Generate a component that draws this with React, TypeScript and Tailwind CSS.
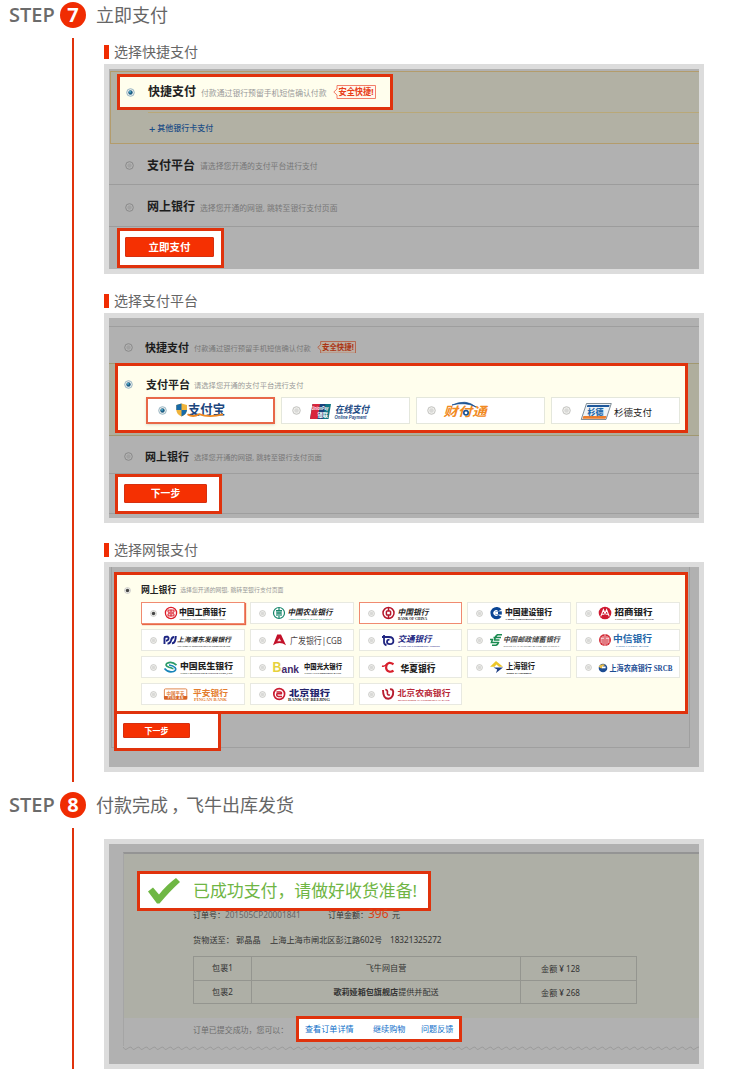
import React from "react";

const CJK = "font-['Noto_Sans','Noto_Sans_CJK_SC',sans-serif]";

function Radio({ on = false, dim = false, small = false }: { on?: boolean; dim?: boolean; small?: boolean }) {
  const s = small ? 7 : 9;
  return (
    <svg width={s} height={s} viewBox="0 0 9 9" className="shrink-0">
      <circle cx="4.5" cy="4.5" r="3.8" fill={dim ? "#b4b4b4" : "#f1f1ee"} stroke={dim ? "#858585" : on && !small ? "#8fb0bf" : "#bdbdba"} strokeWidth="0.9" />
      <circle cx="4.5" cy="4.5" r="2.2" fill={on ? (small ? "#444444" : "#1d5f86") : dim ? "#a2a2a2" : "#d9d9d7"} />
      {on && !small && <circle cx="4" cy="3.8" r="0.9" fill="#5fc0dd" />}
    </svg>
  );
}

function StepHeader({ n, children, className }: { n: number; children: React.ReactNode; className: string }) {
  return (
    <div className={`flex items-center pl-[9px] ${className}`}>
      <div className="w-[51px] font-['Open_Sans',sans-serif] text-[20px] leading-none font-semibold text-[#6b6b6b]">STEP</div>
      <div className="flex h-[26px] w-[26px] items-center justify-center rounded-full bg-[#f02c02] font-['Open_Sans',sans-serif] text-[20px] leading-none font-bold text-white">
        {n}
      </div>
      <h2 className="ml-[10px] text-[18px] leading-none text-[#666666]">{children}</h2>
    </div>
  );
}

function Label({ children }: { children: React.ReactNode }) {
  return (
    <div className="flex h-[14px] items-center border-l-[5px] border-[#f02c02] pl-[5px] text-[14px] leading-none whitespace-nowrap text-[#666666]">
      {children}
    </div>
  );
}

function Panel({ className, children }: { className: string; children: React.ReactNode }) {
  return <div className={`w-[600px] overflow-hidden border-[5px] border-[#dcdcdc] bg-[#b1b1b1] ${className}`}>{children}</div>;
}

function Badge({ dim = false }: { dim?: boolean }) {
  return (
    <svg width={dim ? 39 : 43} height={dim ? 12.7 : 14} viewBox="0 0 43 14" className="ml-[6px] shrink-0">
      <path d="M4 .5H42.5V13.5H4V10L.8 7L4 4Z" fill={dim ? "#bcaea3" : "#fff8ed"} stroke={dim ? "#b5553a" : "#f0705a"} strokeWidth="0.9" />
      <text x="5.5" y="10.4" fontSize="9" fontWeight="700" textLength="35" lengthAdjust="spacingAndGlyphs" fill={dim ? "#ab3514" : "#e8401a"}>
        安全快捷!
      </text>
    </svg>
  );
}

function Button({ children, className }: { children: React.ReactNode; className: string }) {
  return (
    <button className={`flex items-center justify-center rounded-[1px] border border-[#d63010] bg-[#f53002] leading-none font-bold text-white ${className}`}>
      {children}
    </button>
  );
}

function Pay({ on = false, children }: { on?: boolean; children: React.ReactNode }) {
  return (
    <div className={`flex h-[27px] w-[129px] items-center bg-white ${on ? "border-2 border-[#e86848] pl-[10px] shadow-sm" : "border border-[#e4e7dc] pl-[10px]"}`}>
      <Radio on={on} />
      <svg width="100" height="25" viewBox="0 0 100 25" className="ml-[4px] shrink-0">
        {children}
      </svg>
    </div>
  );
}

type Bank = {
  icon: React.ReactNode;
  name: string;
  x: number;
  w: number;
  color?: string;
  y?: number;
  weight?: number;
  size?: number;
  slant?: boolean;
  serif?: boolean;
  sub?: string;
  subW?: number;
  subY?: number;
  subX?: number;
  subSize?: number;
  subColor?: string;
  red?: boolean;
};

const banks: Bank[] = [
  {
    name: "中国工商银行", x: 16, w: 47, weight: 900, sub: "INDUSTRIAL AND COMMERCIAL BANK OF CHINA", red: true,
    icon: <g fill="none" stroke="#dc1c28" strokeWidth="1.3"><circle cx="8" cy="10" r="5.6" /><path d="M5 7.1H11V9.2H5ZM5 10.8H11V12.9H5ZM8 6.5V9M8 11V13.6" strokeWidth="1" /></g>,
  },
  {
    name: "中国农业银行", x: 15.5, w: 45, slant: true, sub: "AGRICULTURAL BANK OF CHINA", subColor: "#169272",
    icon: <g fill="none" stroke="#17866a" strokeWidth="1.2"><circle cx="7" cy="10" r="5.5" /><path d="M7 5V15M4 7.5H10M4.6 10H9.4M5 7.5V13M9 7.5V13" /></g>,
  },
  {
    name: "中国银行", x: 16.5, w: 31, slant: true, sub: "BANK OF CHINA", subW: 29, subSize: 4, red: true,
    icon: <g fill="none" stroke="#b5172b" strokeWidth="1.5"><circle cx="7.5" cy="10" r="5.5" /><rect x="5.4" y="8" width="4.2" height="4" rx=".8" /><path d="M7.5 4.5V8M7.5 12V15.5" /></g>,
  },
  {
    name: "中国建设银行", x: 16, w: 47, weight: 900, sub: "China Construction Bank", subW: 38,
    icon: <g><path d="M12.6 6.4A6.2 6.2 0 1 0 12.6 13.8L9.2 12A2.8 2.8 0 1 1 9.2 8.2Z" fill="#0b4594" /><path d="M6.4 8.3H12.8V11.6H6.4Z" fill="#0b4594" /><path d="M6.2 8.6H9V11.2H6.2Z" fill="#fff" /></g>,
  },
  {
    name: "招商银行", x: 16.5, w: 38, weight: 900, sub: "CHINA MERCHANTS BANK", subW: 39,
    icon: <g><circle cx="7" cy="10" r="6.3" fill="#cf1830" /><path d="M2.8 13.4L5.4 6.7L7 10.5L8.6 6.7L11.2 13.4M4 11.2H6.2M7.8 11.2H10" fill="none" stroke="#fff" strokeWidth="1.1" /></g>,
  },
  {
    name: "上海浦东发展银行", x: 14, w: 54, size: 6.6, slant: true, sub: "SHANGHAI PUDONG DEVELOPMENT BANK",
    icon: <g fill="none" stroke="#1c2482" strokeWidth="1.9"><path d="M1.5 14V8Q1.5 6.8 3 6.8H4.8Q6 7.5 5.5 9Q5 10.8 3 10.8M4.5 13.5Q7 14 8 10.5Q8.8 7 11.2 7M9 13.2Q12.6 13.5 12.8 6" /></g>,
  },
  {
    name: "广发银行|CGB", x: 18, w: 52, weight: 400, size: 9, y: 13.5, color: "#4b4446",
    icon: <g><path d="M5.2 4.5H9L14 15.2Q7.5 10.8 1 15.2Z" fill="#c21029" /><path d="M7.3 8.2L9.3 11.3H5.3Z" fill="#fff" opacity=".85" /></g>,
  },
  {
    name: "交通银行", x: 16.5, w: 34, size: 8.5, slant: true, color: "#202581", sub: "BANK OF COMMUNICATIONS", subW: 42, subColor: "#202581",
    icon: <g fill="none" stroke="#202581" strokeWidth="1.8"><path d="M1 7H8Q12.4 7 12.4 11Q12.4 14.2 8.8 14.2Q6 14.2 6 11.8Q6 9.7 8.5 9.7M3 5V12Q3 14.5 5.5 15.3" /></g>,
  },
  {
    name: "中国邮政储蓄银行", x: 14, w: 57, size: 7, slant: true, color: "#444444", sub: "POSTAL SAVINGS BANK OF CHINA", subColor: "#666666",
    icon: <g fill="none" stroke="#1b8b51" strokeWidth="1.5"><path d="M13 4.8H8.5Q6 6 5.6 10H10.5M12 7.4H4.5M9.7 12.6H2.4L3.5 9.6H1M3 15.2H7Q9 14.5 9.8 12" /></g>,
  },
  {
    name: "中信银行", x: 15, w: 39, size: 9, color: "#2365a9", sub: "CHINA CITIC BANK", subX: 18, subW: 33, subColor: "#2365a9",
    icon: <g><circle cx="7" cy="10" r="6" fill="#d32b37" /><path d="M7 4V16M3.2 7.3V13M5 6V14.5M9 6V14.5M10.8 7.3V13M3 8.3H6M8 8.3H11" stroke="#fff" strokeWidth=".75" /></g>,
  },
  {
    name: "中国民生银行", x: 17, w: 53, size: 8.2, weight: 900, sub: "CHINA MINSHENG BANKING CORP.,LTD",
    icon: <g fill="none" strokeWidth="1.7"><path d="M13.5 8.2Q9 3.8 4.2 6.2Q1.2 8.6 6 10.2Q10 11.2 10 12.2" stroke="#2a9b68" /><path d="M1.5 11.5Q5 16 10.6 14.5Q14 13 12 10.5Q10 8.6 6 8" stroke="#1684ba" /></g>,
  },
  {
    name: "中国光大银行", x: 32, w: 38, size: 7, y: 12, weight: 900, sub: "CHINA EVERBRIGHT BANK", subY: 16.8,
    icon: <g><text x="0.5" y="15" fontSize="14" fontFamily="Liberation Sans" fontWeight="bold" textLength="9" lengthAdjust="spacingAndGlyphs" fill="#e6d13c">B</text><text x="9.5" y="15.5" fontSize="10" fontFamily="Liberation Sans" fontWeight="bold" textLength="17.5" lengthAdjust="spacingAndGlyphs" fill="#432a6a">ank</text></g>,
  },
  {
    name: "华夏银行", x: 19.5, w: 35, size: 8.6, y: 15, weight: 900, sub: "HUAXIA  BANK", subX: 28, subW: 25, subY: 5.6,
    icon: <g fill="none" stroke="#d81f2c" strokeWidth="2.2"><path d="M12.5 7.2Q7.5 4 5.5 8.3Q4 13.5 8.5 14.7Q10.8 15 12.5 13.7" /><path d="M1 9Q4 10 6 6.7" strokeWidth="1.4" /></g>,
  },
  {
    name: "上海银行", x: 17, w: 29, size: 8.4, serif: true, sub: "Bank of Shanghai", subW: 25,
    icon: <g><path d="M1 9.8L7 4L14 9.8H10L7.4 7.6L5.5 9.8Z" fill="#ecc62b" /><path d="M4.5 10.5H14L7 16L8.2 12.6Z" fill="#1d3e85" /></g>,
  },
  {
    name: "上海农商银行 SRCB", x: 11.5, w: 63, size: 7.8, y: 13.5, color: "#1c4c93", serif: true,
    icon: <g><circle cx="5" cy="11" r="4.3" fill="#1c4c93" /><path d="M0.6 9.5Q4 5.8 7.5 8Q4.5 8.5 4.3 11.5Q2 11.5 .6 9.5Z" fill="#e8bd4a" /><path d="M4 9.5H7.6V11.3H4Z" fill="#fff" /></g>,
  },
  {
    name: "平安银行", x: 30, w: 35, size: 8.4, color: "#e47d2e", sub: "PINGAN BANK", subX: 31, subW: 33, subSize: 3.8, subColor: "#e47d2e",
    icon: <g><rect x="1.4" y="4.9" width="22.4" height="10.2" rx="1" fill="#fff" stroke="#df7b3c" strokeWidth=".9" /><rect x="1" y="12" width="23.2" height="3.5" fill="#d86324" /><text x="3.5" y="10.6" fontSize="4.5" fontWeight="700" textLength="18" lengthAdjust="spacingAndGlyphs" fill="#df7b3c">中国平安</text><text x="5" y="14.9" fontSize="2.6" fontFamily="Liberation Sans" fontWeight="700" textLength="15" fill="#ffffff">PING AN</text></g>,
  },
  {
    name: "北京银行", x: 17, w: 41, size: 8.4, color: "#22226a", weight: 900, sub: "BANK OF BEIJING", subX: 16, subW: 42, subSize: 4,
    icon: <g fill="none" stroke="#ca1d32" strokeWidth="1.7"><circle cx="7.2" cy="10" r="5.4" /><path d="M4.5 8H8Q10 8 9.4 9.8H5Q4 12 6.5 12.4H10" strokeWidth="1.5" /></g>,
  },
  {
    name: "北京农商银行", x: 16.5, w: 53, size: 8.4, color: "#b72838", sub: "BEIJING RURAL COMMERCIAL BANK", subColor: "#b72838",
    icon: <g fill="none" stroke="#b81f30" strokeWidth="1.9"><path d="M2 6Q2 14.8 7.3 14.8Q12.5 14 12.2 7.5Q11.6 4.8 9 5.4" /><path d="M4.3 5.5Q7 6.2 6.4 8.6Q6 11.5 9 11" strokeWidth="1.6" /></g>,
  },
];

function BankCell({ bank, on }: { bank: Bank; on: boolean }) {
  return (
    <div className={`flex h-[22px] items-center border bg-white pl-[8px] ${bank.red ? "border-[#f08a70]" : "border-[#e8e9e1]"} ${on ? "shadow-[1px_1px_1px_#e86848]" : ""}`}>
      <Radio small on={on} />
      <svg width="78" height="20" viewBox="0 0 78 20" className="ml-[6px] shrink-0 overflow-visible">
        {bank.icon}
        <text
          x={bank.x}
          y={bank.y ?? 12}
          fontSize={bank.size ?? 8}
          fontWeight={bank.weight ?? 700}
          fontStyle={bank.slant ? "italic" : "normal"}
          fontFamily={bank.serif ? "'Liberation Serif','Noto Sans CJK SC',serif" : undefined}
          fill={bank.color ?? "#1f1f1f"}
          textLength={bank.w}
          lengthAdjust="spacingAndGlyphs"
        >
          {bank.name}
        </text>
        {bank.sub && (
          <text
            x={bank.subX ?? bank.x + 0.5}
            y={bank.subY ?? 17}
            fontSize={bank.subSize ?? 2.9}
            fontWeight="700"
            fontFamily="'Liberation Serif',serif"
            fill={bank.subColor ?? "#222222"}
            textLength={bank.subW ?? bank.w - 1}
            lengthAdjust="spacingAndGlyphs"
          >
            {bank.sub}
          </text>
        )}
      </svg>
    </div>
  );
}

function QuickPayPanel() {
  return (
    <Panel className="h-[210px]">
      <div className="mt-[2px] ml-px h-[73px] border-y border-l border-[#b39c6c] bg-[#b2b1a4]">
        <div className="mt-[2px] ml-[6px] flex h-[36px] w-[276px] items-center border-[3px] border-[#e0320c] bg-[#fffeed] pl-[6px] whitespace-nowrap">
          <Radio on />
          <strong className="ml-[13px] text-[12px] leading-none text-[#222222]">快捷支付</strong>
          <span className="mt-[3px] ml-[5px] text-[7.85px] leading-none text-[#999999]">付款通过银行预留手机短信确认付款</span>
          <Badge />
        </div>
        <div className="mt-[2px] ml-[37px] flex h-[31px] items-center border-t border-[#b9a878] pl-[1px] text-[8px] leading-none font-medium text-[#1c4d86]">
          <span className="mr-[2px] text-[11px]">+</span>其他银行卡支付
        </div>
      </div>
      <div className="flex h-[41px] items-center border-b border-[#9c9c9c] pt-[3px] pl-[16px]">
        <Radio dim />
        <strong className="ml-[13px] text-[12px] leading-none text-[#1c1c1c]">支付平台</strong>
        <span className="mt-[3px] ml-[5px] text-[7.85px] leading-none text-[#777777]">请选择您开通的支付平台进行支付</span>
      </div>
      <div className="flex h-[42px] items-center border-b border-[#9c9c9c] pt-[3px] pl-[16px]">
        <Radio dim />
        <strong className="ml-[13px] text-[12px] leading-none text-[#1c1c1c]">网上银行</strong>
        <span className="mt-[3px] ml-[5px] text-[7.85px] leading-none text-[#777777]">选择您开通的网银, 跳转至银行支付页面</span>
      </div>
      <div className="mt-[1px] ml-[8px] h-[40px] w-[107px] border-[3px] border-[#e0320c] bg-white pt-[6px] pl-[5px]">
        <Button className="h-[20px] w-[89px] text-[10.5px]">立即支付</Button>
      </div>
    </Panel>
  );
}

function PlatformPanel() {
  return (
    <Panel className="h-[210px]">
      <div className="mt-[8px] flex h-[37px] items-center border-t border-[#9e9e9e] pt-[4px] pl-[15px] whitespace-nowrap">
        <Radio dim />
        <strong className="ml-[12px] text-[11px] leading-none text-[#1c1c1c]">快捷支付</strong>
        <span className="mt-[3px] ml-[5px] text-[7.3px] leading-none text-[#777777]">付款通过银行预留手机短信确认付款</span>
        <Badge dim />
      </div>
      <div className="h-[73px] border-y border-[#a19870] bg-[#afae9d]">
        <div className="-mt-px ml-[6px] h-[70px] w-[573px] border-[3px] border-[#e0320c] bg-[#fffeed]">
          <div className="flex h-[31px] items-center pt-[6px] pl-[6px] whitespace-nowrap">
            <Radio on />
            <strong className="ml-[13px] text-[11px] leading-none text-[#222222]">支付平台</strong>
            <span className="mt-[2px] ml-[4px] text-[7.3px] leading-none text-[#999999]">请选择您开通的支付平台进行支付</span>
          </div>
          <div className="flex gap-[6px] pl-[28px]">
            <Pay on>
              <path d="M10.5 5.5L16 7V12Q15.5 16.5 10.5 18.5Q5.7 16.5 5.3 12V7Z" fill="#f0b43b" />
              <path d="M10.5 5.5V12H5.3V7ZM10.5 12H16Q15.5 16.5 10.5 18.5Z" fill="#176aa8" />
              <text x="17" y="16" fontSize="13" fontWeight="700" textLength="37" lengthAdjust="spacingAndGlyphs" fill="#1d477e">支付宝</text>
              <path d="M16.5 16.2Q22 19.8 28 16.2Q38 20 52 16.4" fill="none" stroke="#f18a22" strokeWidth="1.8" />
            </Pay>
            <Pay>
              <path d="M7.5 6H26L23.5 21H5Z" fill="#0e7583" />
              <path d="M7.5 6H15L12.7 21H5Z" fill="#d8243c" />
              <path d="M15 6H20.5L18 21H12.7Z" fill="#19437c" />
              <text x="6.5" y="12.2" fontSize="5" fontFamily="Liberation Sans" fontWeight="700" fontStyle="italic" textLength="17" lengthAdjust="spacingAndGlyphs" fill="#fff">UnionPay</text>
              <text x="12.5" y="18.7" fontSize="5.5" fontWeight="700" textLength="10.5" lengthAdjust="spacingAndGlyphs" fill="#fff">银联</text>
              <text x="30" y="15.3" fontSize="10" fontWeight="700" fontStyle="italic" textLength="34" lengthAdjust="spacingAndGlyphs" fill="#1f4c85">在线支付</text>
              <text x="29.5" y="20.7" fontSize="4.5" fontFamily="Liberation Sans" fontWeight="700" fontStyle="italic" textLength="32" lengthAdjust="spacingAndGlyphs" fill="#1f4c85">Online Payment</text>
            </Pay>
            <Pay>
              <text x="3.5" y="17.8" fontSize="12.5" fontWeight="700" fontStyle="italic" textLength="43" lengthAdjust="spacingAndGlyphs" fill="#f18a22">财付通</text>
              <path d="M12 7Q26 .5 36 9Q26 3.5 12 7Z" fill="#164f91" stroke="#164f91" strokeWidth=".7" />
              <circle cx="26" cy="14.8" r="2.2" fill="#fff" stroke="#164f91" strokeWidth="1.6" />
            </Pay>
            <Pay>
              <path d="M11.5 5.5H36.3L31 21.5H6.2Z" fill="#eef3f7" stroke="#62727e" strokeWidth=".8" />
              <path d="M12.5 7H34.6L34 9H11.8Z" fill="#1d579b" />
              <path d="M8.4 18H31.5L30.5 20.7H7.5Z" fill="#ee7d2b" />
              <text x="12.5" y="16.7" fontSize="8" fontWeight="900" textLength="16" lengthAdjust="spacingAndGlyphs" fill="#1d68a9">杉德</text>
              <text x="39" y="18" fontSize="9.5" textLength="38" lengthAdjust="spacingAndGlyphs" fill="#222">杉德支付</text>
            </Pay>
          </div>
        </div>
      </div>
      <div className="flex h-[38px] items-center border-b border-[#9e9e9e] pt-[3px] pl-[15px]">
        <Radio dim />
        <strong className="ml-[12px] text-[11px] leading-none text-[#1c1c1c]">网上银行</strong>
        <span className="mt-[3px] ml-[5px] text-[7.3px] leading-none text-[#777777]">选择您开通的网银, 跳转至银行支付页面</span>
      </div>
      <div className="h-[40px] border-b border-[#9e9e9e]">
        <div className="ml-[6px] h-[40px] w-[107px] border-[3px] border-[#e0320c] bg-white pt-[7px] pl-[6px]">
          <Button className="h-[19px] w-[83px] text-[9.8px]">下一步</Button>
        </div>
      </div>
    </Panel>
  );
}

function BankPanel() {
  return (
    <Panel className="h-[210px]">
      <div className="ml-[2px] h-[181px] w-[579px] border-x border-b border-[#9f9f9f] pt-[5px] pl-[2px]">
        <div className="h-[142px] w-[574px] border-[3px] border-[#e0320c] bg-[#fffeed]">
          <div className="flex h-[27px] items-center pt-[3px] pl-[7px] whitespace-nowrap">
            <Radio small on />
            <strong className="ml-[10px] text-[8.8px] leading-none text-[#222222]">网上银行</strong>
            <span className="mt-[2px] ml-[4px] text-[5.9px] leading-none text-[#999999]">选择您开通的网银, 跳转至银行支付页面</span>
          </div>
          <div className="ml-[24px] grid w-[539px] grid-cols-5 gap-[5px]">
            {banks.map((b, i) => (
              <BankCell key={b.name} bank={b} on={i === 0} />
            ))}
          </div>
        </div>
        <div className="h-[37px] w-[107px] border-[3px] border-t-0 border-[#e0320c] bg-white pt-[9px] pl-[6px]">
          <Button className="h-[15px] w-[67px] text-[8px]">下一步</Button>
        </div>
      </div>
    </Panel>
  );
}

function DonePanel() {
  return (
    <Panel className="h-[230px]">
      <div className="mt-[8px] ml-[14px] h-[166px] border-t-2 border-l border-t-[#949494] border-l-[#a5a5a5] bg-[#aeafa6]">
        <div className="mt-[17px] ml-[13px] flex h-[40px] w-[294px] items-center border-[3px] border-[#e0320c] bg-white pl-[8px] whitespace-nowrap">
          <svg width="32" height="26" viewBox="0 0 32 26">
            <path d="M0 13.5L5 9.5L11 16.5Q19 6.5 28 0L32 4Q22 13 11.5 25.5H9Z" fill="#6fb744" />
          </svg>
          <span className="ml-[13px] text-[16.9px] leading-none text-[#6fb544]">已成功支付，请做好收货准备!</span>
        </div>
        <div className="-mt-[3px] ml-[69px] flex h-[14px] items-center text-[8px] leading-none whitespace-nowrap text-[#333333]">
          <span className="w-[32px]">订单号：</span>
          <span className="w-[103px] text-[8.2px] text-[#666666]">201505CP20001841</span>
          <span className="w-[40px]">订单金额：</span>
          <span className="-mt-[3px] w-[24px] text-[12px] text-[#d94218]">396</span>
          <span>元</span>
        </div>
        <div className="mt-[10px] ml-[69px] flex h-[16px] items-center text-[8.2px] leading-none whitespace-nowrap text-[#333333]">
          <span className="w-[43px]">货物送至：</span>
          <span className="w-[34px]">郭晶晶</span>
          <span className="w-[120px]">上海上海市闸北区彭江路602号</span>
          <span>18321325272</span>
        </div>
        <table className="mt-[8px] ml-[69px] h-[48px] w-[443px] table-fixed border-collapse text-center text-[8.1px] leading-none text-[#333333]">
          <colgroup>
            <col className="w-[58px]" />
            <col className="w-[269px]" />
            <col className="w-[116px]" />
          </colgroup>
          <tbody>
            <tr>
              <td className="border border-[#94958f]">包裹1</td>
              <td className="border border-[#94958f]">飞牛网自营</td>
              <td className="border border-[#94958f] pt-[2px] pr-[36px]">金额 ¥ 128</td>
            </tr>
            <tr>
              <td className="border border-[#94958f]">包裹2</td>
              <td className="border border-[#94958f]"><b>歌莉娅箱包旗舰店</b>提供并配送</td>
              <td className="border border-[#94958f] pt-[2px] pr-[36px]">金额 ¥ 268</td>
            </tr>
          </tbody>
        </table>
      </div>
      <div className="ml-[14px] flex h-[28px] items-center border-l border-[#a5a5a5] pl-[69px] text-[7.95px] leading-none whitespace-nowrap">
        <span className="-mt-[2px] w-[103px] text-[#6c6c6c]">订单已提交成功，您可以：</span>
        <div className="-mt-[6px] flex h-[26px] w-[166px] items-center border-[3px] border-[#e0320c] bg-white pl-[6px] text-[8.1px] text-[#0f6fc9]">
          <a className="w-[68px]">查看订单详情</a>
          <a className="w-[48px]">继续购物</a>
          <a>问题反馈</a>
        </div>
      </div>
      <svg width="576" height="5" className="ml-[14px] block">
        <defs>
          <pattern id="wave" width="8" height="5" patternUnits="userSpaceOnUse">
            <path d="M0 1Q2 5 4 3T8 1" fill="none" stroke="#9b9b9b" strokeWidth="1" />
          </pattern>
        </defs>
        <rect width="576" height="5" fill="url(#wave)" />
      </svg>
    </Panel>
  );
}

export default function App() {
  return (
    <main className={`h-[1074px] w-[734px] overflow-hidden bg-white ${CJK}`}>
      <StepHeader n={7} className="h-[38px] pb-[8px]">立即支付</StepHeader>
      <section className="flex h-[744px]">
        <div className="ml-[72px] w-[2px] shrink-0 bg-[#e0320c]" />
        <div className="ml-[30px] pt-[7px]">
          <Label>选择快捷支付</Label>
          <div className="h-[5px]" />
          <QuickPayPanel />
          <div className="h-[20px]" />
          <Label>选择支付平台</Label>
          <div className="h-[5px]" />
          <PlatformPanel />
          <div className="h-[20px]" />
          <Label>选择网银支付</Label>
          <div className="h-[5px]" />
          <BankPanel />
        </div>
      </section>
      <StepHeader n={8} className="h-[46px]">
        付款完成<span className="inline-block translate-x-[3px]">，</span>飞牛出库发货
      </StepHeader>
      <section className="flex h-[241px]">
        <div className="ml-[72px] w-[2px] shrink-0 bg-[#e0320c]" />
        <div className="ml-[30px] pt-[11px]">
          <DonePanel />
        </div>
      </section>
    </main>
  );
}
